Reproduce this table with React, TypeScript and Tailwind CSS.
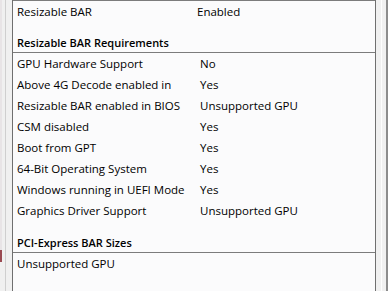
import React from "react";

type Row = { label: string; value?: string };

const requirements: Row[] = [
	{ label: "GPU Hardware Support", value: "No" },
	{ label: "Above 4G Decode enabled in", value: "Yes" },
	{ label: "Resizable BAR enabled in BIOS", value: "Unsupported GPU" },
	{ label: "CSM disabled", value: "Yes" },
	{ label: "Boot from GPT", value: "Yes" },
	{ label: "64-Bit Operating System", value: "Yes" },
	{ label: "Windows running in UEFI Mode", value: "Yes" },
	{ label: "Graphics Driver Support", value: "Unsupported GPU" },
];

function InfoRow({ label, value }: Row) {
	return (
		<div className="flex h-[21px] items-center">
			<div className="w-[187px] shrink-0 pl-[4px]">{label}</div>
			{value && <div>{value}</div>}
		</div>
	);
}

function SectionHeader({ title }: { title: string }) {
	return (
		<div className="h-[20px] border-b border-[#7c7c7c] pl-[4px] pt-[2px] text-[11px] font-semibold">
			{title}
		</div>
	);
}

export default function App() {
	return (
		<div
			className="flex h-[291px] w-[388px] overflow-hidden bg-[#fbfbfc] text-[11.5px] text-black"
			style={{ fontFamily: '"Open Sans", "Noto Sans", sans-serif' }}>
			{/* left frame */}
			<div className="flex w-[12px] shrink-0 bg-[#f0f0f0]">
				<div className="flex w-[2px] flex-col">
					<div className="h-[250px] bg-[#e8e4e6]" />
					<div className="h-[12px] bg-[#9a4a52]" />
				</div>
				<div className="w-[3px]" />
				<div className="w-px bg-[#cfcfcf]" />
			</div>
			<div className="w-px shrink-0 bg-[#6f6f6f]" />

			{/* content */}
			<div className="flex flex-1 flex-col">
				<div className="border-t border-[#7c7c7c]">
					<div className="flex h-[21px] items-center">
						<div className="w-[184px] shrink-0 pl-[4px]">Resizable BAR</div>
						<div>Enabled</div>
					</div>
				</div>

				<div className="mt-[11px]">
					<SectionHeader title="Resizable BAR Requirements" />
					{requirements.map((r) => (
						<InfoRow key={r.label} label={r.label} value={r.value} />
					))}
				</div>

				<div className="mt-[12px]">
					<SectionHeader title="PCI-Express BAR Sizes" />
					<InfoRow label="Unsupported GPU" />
				</div>
			</div>

			{/* right frame */}
			<div className="w-px shrink-0 bg-[#6f6f6f]" />
			<div className="flex w-[12px] shrink-0 bg-[#f0f0f0]">
				<div className="w-[5px]" />
				<div className="w-px bg-[#fdfdfd]" />
				<div className="w-[4px]" />
				<div className="w-[2px] bg-[#8c8c8c]" />
			</div>
		</div>
	);
}
